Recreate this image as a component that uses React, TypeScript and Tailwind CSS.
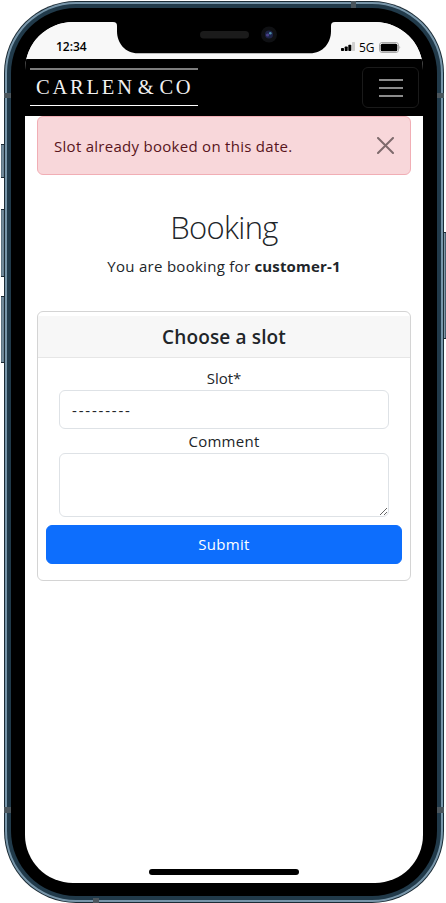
import React from "react";

const textFont = "font-['Open_Sans','Noto_Sans',sans-serif]";

function SideButton({ className }: { className: string }) {
  return (
    <div
      className={`absolute border-y border-[#1b2a34] bg-linear-to-r from-[#506675] via-[#8199a9] to-[#2b4353] ${className}`}
    />
  );
}

function Notch() {
  return (
    <svg className="absolute left-[88px] top-0" width="222" height="32" viewBox="0 0 222 32">
      <path d="M0 0 C3 0 4 1.5 4 4 V9 C4 21 12 31.3 25 31.3 H197 C210 31.3 218 21 218 9 V4 C218 1.5 219 0 222 0 Z" fill="#000" />
      <rect x="87" y="9" width="49" height="7.5" rx="3.75" fill="#1b1b1b" />
      <circle cx="156" cy="12.5" r="8" fill="#0f1013" />
      <circle cx="156" cy="12.5" r="4" fill="#1d2348" />
      <circle cx="154.6" cy="13" r="1.6" fill="#493f88" />
      <circle cx="157.3" cy="11.3" r="1.3" fill="#4b8ba8" />
    </svg>
  );
}

function StatusBar() {
  return (
    <div className="relative flex h-[37px] shrink-0 items-start justify-between bg-[#f8f8f8] pl-[31px] pr-[22px] pt-[17px] text-[12px] leading-4 text-black">
      <Notch />
      <span className="font-semibold">12:34</span>
      <div className="flex items-start">
        <svg className="mt-[3px]" width="15" height="10" viewBox="0 0 15 10">
          <rect x="0" y="6" width="3" height="3" rx=".7" />
          <rect x="3.7" y="4.6" width="3" height="4.4" rx=".7" />
          <rect x="7.3" y="2.7" width="3" height="6.3" rx=".7" />
          <rect x="11" y="0" width="3" height="9" rx=".7" fill="#cfcfcf" />
        </svg>
        <span className="ml-[3px] mt-[1px] w-[16px] whitespace-nowrap font-medium">5G</span>
        <svg className="ml-[4px] mt-[3px]" width="22" height="11" viewBox="0 0 22 11">
          <rect x=".5" y=".5" width="19" height="10" rx="2.5" fill="none" stroke="#aaa" />
          <rect x="1.7" y="1.7" width="16.6" height="7.6" rx="1.5" />
          <path d="M20.5 3.5 Q22 5.3 20.5 7.2Z" fill="#999" />
        </svg>
      </div>
    </div>
  );
}

function Navbar() {
  return (
    <header className="flex h-[57px] shrink-0 items-start justify-between bg-black pl-[5px] pr-[4px] pt-[8px]">
      <div className="mt-[1px] flex h-[38px] w-[168px] items-center border-b border-t-2 border-b-white border-t-[#7d7d7d] pl-[6px] font-['Liberation_Serif',serif] text-[20.5px] leading-none text-[#f0f0f0]">
        <span className="whitespace-nowrap tracking-[2.8px] [word-spacing:-5px]">CARLEN &amp; CO</span>
      </div>
      <button aria-label="Menu" className="flex h-[41px] w-[57px] flex-col items-center justify-center gap-[6px] rounded-md border border-[#1a1a1a]">
        <span className="h-[2px] w-[24px] bg-[#8b8b8b]" />
        <span className="h-[2px] w-[24px] bg-[#8b8b8b]" />
        <span className="h-[2px] w-[24px] bg-[#8b8b8b]" />
      </button>
    </header>
  );
}

function BookingPage() {
  return (
    <main className="flex flex-col pl-[12px] pr-[12px] text-center text-[15px] leading-6 tracking-[0.28px] text-[#212529]">
      <div role="alert" className="flex h-[59px] items-center justify-between rounded-md border border-[#f1aeb5] bg-[#f8d7da] pl-[16px] pr-[16px] text-[#58151c]">
        <span className="whitespace-nowrap">Slot already booked on this date.</span>
        <svg width="17" height="17" viewBox="0 0 17 17" fill="none" stroke="#7e6a6c" strokeWidth="2" strokeLinecap="round">
          <path d="M1 1 16 16M16 1 1 16" />
        </svg>
      </div>
      <h1 className="mt-[33px] h-[38px] text-[31px] font-light leading-[38px] tracking-[-0.7px]">Booking</h1>
      <p className="mt-[8px] whitespace-nowrap">
        You are booking for <b className="tracking-[0.15px]">customer-1</b>
      </p>
      <section className="mt-[33px] h-[270px] rounded-md border border-[#d4d4d4] pt-[4px]">
        <h2 className="h-[42px] border-b border-[#e6e6e6] bg-[#f7f7f7] text-[19px] font-semibold leading-[42px] tracking-[0.15px]">Choose a slot</h2>
        <form className="flex flex-col px-[8px] pt-[8px]" onSubmit={(e) => e.preventDefault()}>
          <label htmlFor="slot" className="tracking-normal">Slot*</label>
          <button id="slot" type="button" className="mx-[13px] h-[39px] rounded-md border border-[#dee2e6] pl-[12px] text-left tracking-[1.8px]">---------</button>
          <label htmlFor="comment">Comment</label>
          <textarea id="comment" className="mx-[13px] h-[64px] resize-y rounded-md border border-[#dee2e6]" />
          <button type="submit" className="mt-[8px] h-[39px] rounded-md border border-[#0d6efd] bg-[#0d6efd] pb-[2px] text-white">Submit</button>
        </form>
      </section>
    </main>
  );
}

export default function App() {
  return (
    <div className={`relative h-[903px] w-[446px] overflow-hidden bg-white pl-[4px] pt-[1px] ${textFont}`}>
      <SideButton className="left-[1px] top-[144px] h-[34px] w-[4px]" />
      <SideButton className="left-[1px] top-[209px] h-[68px] w-[4px]" />
      <SideButton className="left-[1px] top-[296px] h-[67px] w-[4px]" />
      <SideButton className="left-[443px] top-[232px] h-[107px] w-[3px]" />
      <div className="relative h-[902px] w-[440px] rounded-[72px] bg-[#1c2c36] p-[1px]">
        <div className="h-full rounded-[71px] bg-[#7896aa] p-[2px]">
          <div className="h-full rounded-[69px] bg-[#213a4a] p-[4px]">
            <div className="h-full rounded-[65px] bg-black pl-[14px] pr-[14px] pt-[14px]">
              <div className="relative flex h-[861px] w-[398px] flex-col overflow-hidden rounded-[48px] bg-white">
                <StatusBar />
                <Navbar />
                <BookingPage />
                <div className="absolute bottom-[8px] left-[124px] h-[6px] w-[150px] rounded-full bg-black" />
              </div>
            </div>
          </div>
        </div>
      </div>
      <i className="absolute left-[4px] top-[93px] h-[5px] w-[7px] bg-[#4b565d]" />
      <i className="absolute left-[437px] top-[93px] h-[5px] w-[7px] bg-[#4b565d]" />
      <i className="absolute left-[4px] top-[807px] h-[6px] w-[7px] bg-[#4b565d]" />
      <i className="absolute left-[437px] top-[807px] h-[6px] w-[7px] bg-[#4b565d]" />
      <i className="absolute left-[351px] top-[1px] h-[7px] w-[5px] bg-[#4b565d]" />
      <i className="absolute left-[93px] top-[898px] h-[5px] w-[6px] bg-[#4b565d]" />
    </div>
  );
}
